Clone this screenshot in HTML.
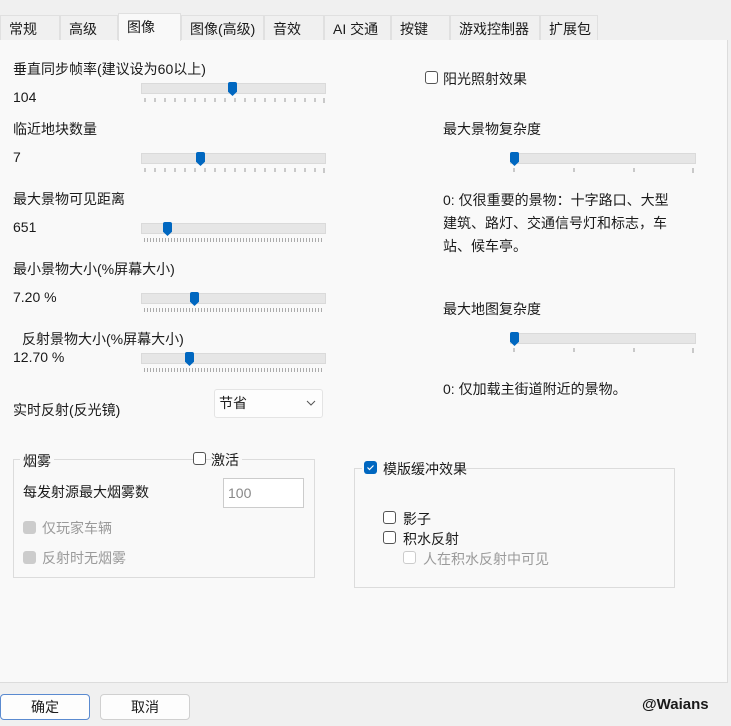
<!DOCTYPE html><html><head><meta charset="utf-8"><style>
body{margin:0;width:731px;height:726px;background:#f0f0f0;font-family:"Liberation Sans","Noto Sans CJK SC",sans-serif;font-size:14px;color:#1a1a1a;position:relative;overflow:hidden}
.a{position:absolute;white-space:nowrap}
.tab{position:absolute;top:15px;height:25px;line-height:27px;border:1px solid #e0e0e0;border-bottom:none;background:#f0f0f0;padding-left:8px;box-sizing:border-box}
.panel{position:absolute;left:0;top:40px;width:727px;height:642px;background:#f9f9f9;border-right:1px solid #dcdcdc;border-bottom:1px solid #dcdcdc}
.trk{position:absolute;width:185px;height:11px;background:#e6e6e6;border:1px solid #dadada;box-sizing:border-box}
.th{position:absolute;width:9px;height:14px;background:#0067c0;clip-path:polygon(0 0,100% 0,100% 70%,50% 100%,0 70%);border-radius:2px}
.tk{position:absolute;height:5px;width:185px}
.cb{position:absolute;width:13px;height:13px;border:1px solid #555;border-radius:3px;box-sizing:border-box;background:#fff}
.grp{position:absolute;border:1px solid #dcdcdc}
.btn{position:absolute;top:694px;width:90px;height:26px;border:1px solid #d0d0d0;border-radius:4px;background:#fdfdfd;box-sizing:border-box;text-align:center;line-height:25px}
.gray{color:#9a9a9a}
</style></head><body>
<div class="panel"></div>
<div class="tab" style="left:0;width:60px">常规</div>
<div class="tab" style="left:60px;width:58px">高级</div>
<div class="tab" style="left:118px;width:63px;top:13px;height:28px;background:#f9f9f9;line-height:26px">图像</div>
<div class="tab" style="left:181px;width:83px">图像(高级)</div>
<div class="tab" style="left:264px;width:60px">音效</div>
<div class="tab" style="left:324px;width:67px">AI 交通</div>
<div class="tab" style="left:391px;width:59px">按键</div>
<div class="tab" style="left:450px;width:90px">游戏控制器</div>
<div class="tab" style="left:540px;width:58px">扩展包</div>

<div class="a" style="left:13px;top:59px">垂直同步帧率(建议设为60以上)</div>
<div class="a" style="left:13px;top:89px">104</div>
<div class="trk" style="left:141px;top:83px"></div><div class="th" style="left:228px;top:82px"></div>
<svg class="tk" style="left:141px;top:98px"><g stroke="#999"><path d="M4 0v4M14 0v4M24 0v4M34 0v4M44 0v4M54 0v4M64 0v4M74 0v4M84 0v4M94 0v4M104 0v4M114 0v4M124 0v4M134 0v4M144 0v4M154 0v4M164 0v4M174 0v4M183 0v5"/></g></svg>

<div class="a" style="left:13px;top:119px">临近地块数量</div>
<div class="a" style="left:13px;top:149px">7</div>
<div class="trk" style="left:141px;top:153px"></div><div class="th" style="left:196px;top:152px"></div>
<svg class="tk" style="left:141px;top:168px"><g stroke="#999"><path d="M4 0v4M14 0v4M24 0v4M34 0v4M44 0v4M54 0v4M64 0v4M74 0v4M84 0v4M94 0v4M104 0v4M114 0v4M124 0v4M134 0v4M144 0v4M154 0v4M164 0v4M174 0v4M183 0v5"/></g></svg>

<div class="a" style="left:13px;top:189px">最大景物可见距离</div>
<div class="a" style="left:13px;top:219px">651</div>
<div class="trk" style="left:141px;top:223px"></div><div class="th" style="left:163px;top:222px"></div>
<div class="tk" style="left:144px;top:238px;width:180px;height:4px;background:repeating-linear-gradient(90deg,#aaa 0 1px,transparent 1px 3px)"></div>

<div class="a" style="left:13px;top:259px">最小景物大小(%屏幕大小)</div>
<div class="a" style="left:13px;top:289px">7.20 %</div>
<div class="trk" style="left:141px;top:293px"></div><div class="th" style="left:190px;top:292px"></div>
<div class="tk" style="left:144px;top:308px;width:180px;height:4px;background:repeating-linear-gradient(90deg,#aaa 0 1px,transparent 1px 3px)"></div>

<div class="a" style="left:22px;top:329px">反射景物大小(%屏幕大小)</div>
<div class="a" style="left:13px;top:349px">12.70 %</div>
<div class="trk" style="left:141px;top:353px"></div><div class="th" style="left:185px;top:352px"></div>
<div class="tk" style="left:144px;top:368px;width:180px;height:4px;background:repeating-linear-gradient(90deg,#aaa 0 1px,transparent 1px 3px)"></div>

<div class="a" style="left:13px;top:400px">实时反射(反光镜)</div>
<div class="a" style="left:214px;top:389px;width:109px;height:29px;background:#fdfdfd;border:1px solid #e4e4e4;border-radius:3px;box-sizing:border-box;line-height:27px;padding-left:4px">节省<svg style="position:absolute;right:6px;top:10px" width="10" height="7"><path d="M1 1l4 4 4-4" fill="none" stroke="#555"/></svg></div>

<div class="cb" style="left:425px;top:71px"></div><div class="a" style="left:443px;top:69px">阳光照射效果</div>
<div class="a" style="left:443px;top:119px">最大景物复杂度</div>
<div class="trk" style="left:510px;top:153px;width:186px"></div><div class="th" style="left:510px;top:152px"></div>
<svg class="tk" style="left:510px;top:168px;width:186px"><g stroke="#999"><path d="M4 0v4M64 0v4M124 0v4M183 0v5"/></g></svg>
<div class="a" style="left:443px;top:189px;line-height:23px">0: 仅很重要的景物：十字路口、大型<br>建筑、路灯、交通信号灯和标志，车<br>站、候车亭。</div>
<div class="a" style="left:443px;top:299px">最大地图复杂度</div>
<div class="trk" style="left:510px;top:333px;width:186px"></div><div class="th" style="left:510px;top:332px"></div>
<svg class="tk" style="left:510px;top:348px;width:186px"><g stroke="#999"><path d="M4 0v4M64 0v4M124 0v4M183 0v5"/></g></svg>
<div class="a" style="left:443px;top:379px">0: 仅加载主街道附近的景物。</div>

<div class="grp" style="left:13px;top:459px;width:300px;height:117px"></div>
<div class="a" style="left:20px;top:451px;background:#f9f9f9;padding:0 3px">烟雾</div>
<div class="cb" style="left:193px;top:452px"></div><div class="a" style="left:211px;top:450px;background:#f9f9f9;padding-right:3px">激活</div>
<div class="a" style="left:23px;top:482px">每发射源最大烟雾数</div>
<div class="a" style="left:223px;top:478px;width:81px;height:30px;border:1px solid #ccc;background:#fff;box-sizing:border-box;line-height:28px;padding-left:4px;color:#888">100</div>
<div class="cb" style="left:23px;top:521px;border:none;background:#ccc"></div><div class="a gray" style="left:42px;top:518px">仅玩家车辆</div>
<div class="cb" style="left:23px;top:551px;border:none;background:#ccc"></div><div class="a gray" style="left:42px;top:548px">反射时无烟雾</div>

<div class="grp" style="left:354px;top:468px;width:319px;height:118px"></div>
<div class="a" style="left:362px;top:460px;width:100px;height:16px;background:#f9f9f9"></div>
<div class="cb" style="left:364px;top:461px;border:none;background:#0067c0"><svg width="13" height="13"><path d="M3.5 6.5l2 2 4-4" fill="none" stroke="#fff" stroke-width="1.2"/></svg></div>
<div class="a" style="left:383px;top:459px">模版缓冲效果</div>
<div class="cb" style="left:383px;top:511px"></div><div class="a" style="left:403px;top:509px">影子</div>
<div class="cb" style="left:383px;top:531px"></div><div class="a" style="left:403px;top:529px">积水反射</div>
<div class="cb" style="left:403px;top:551px;border-color:#ccc"></div><div class="a gray" style="left:423px;top:549px">人在积水反射中可见</div>

<div class="btn" style="left:0;border-color:#5a8ad0;border-width:1px">确定</div>
<div class="btn" style="left:100px">取消</div>
<div class="a" style="left:642px;top:696px;font-weight:bold;font-size:15px">@Waians</div>
</body></html>
